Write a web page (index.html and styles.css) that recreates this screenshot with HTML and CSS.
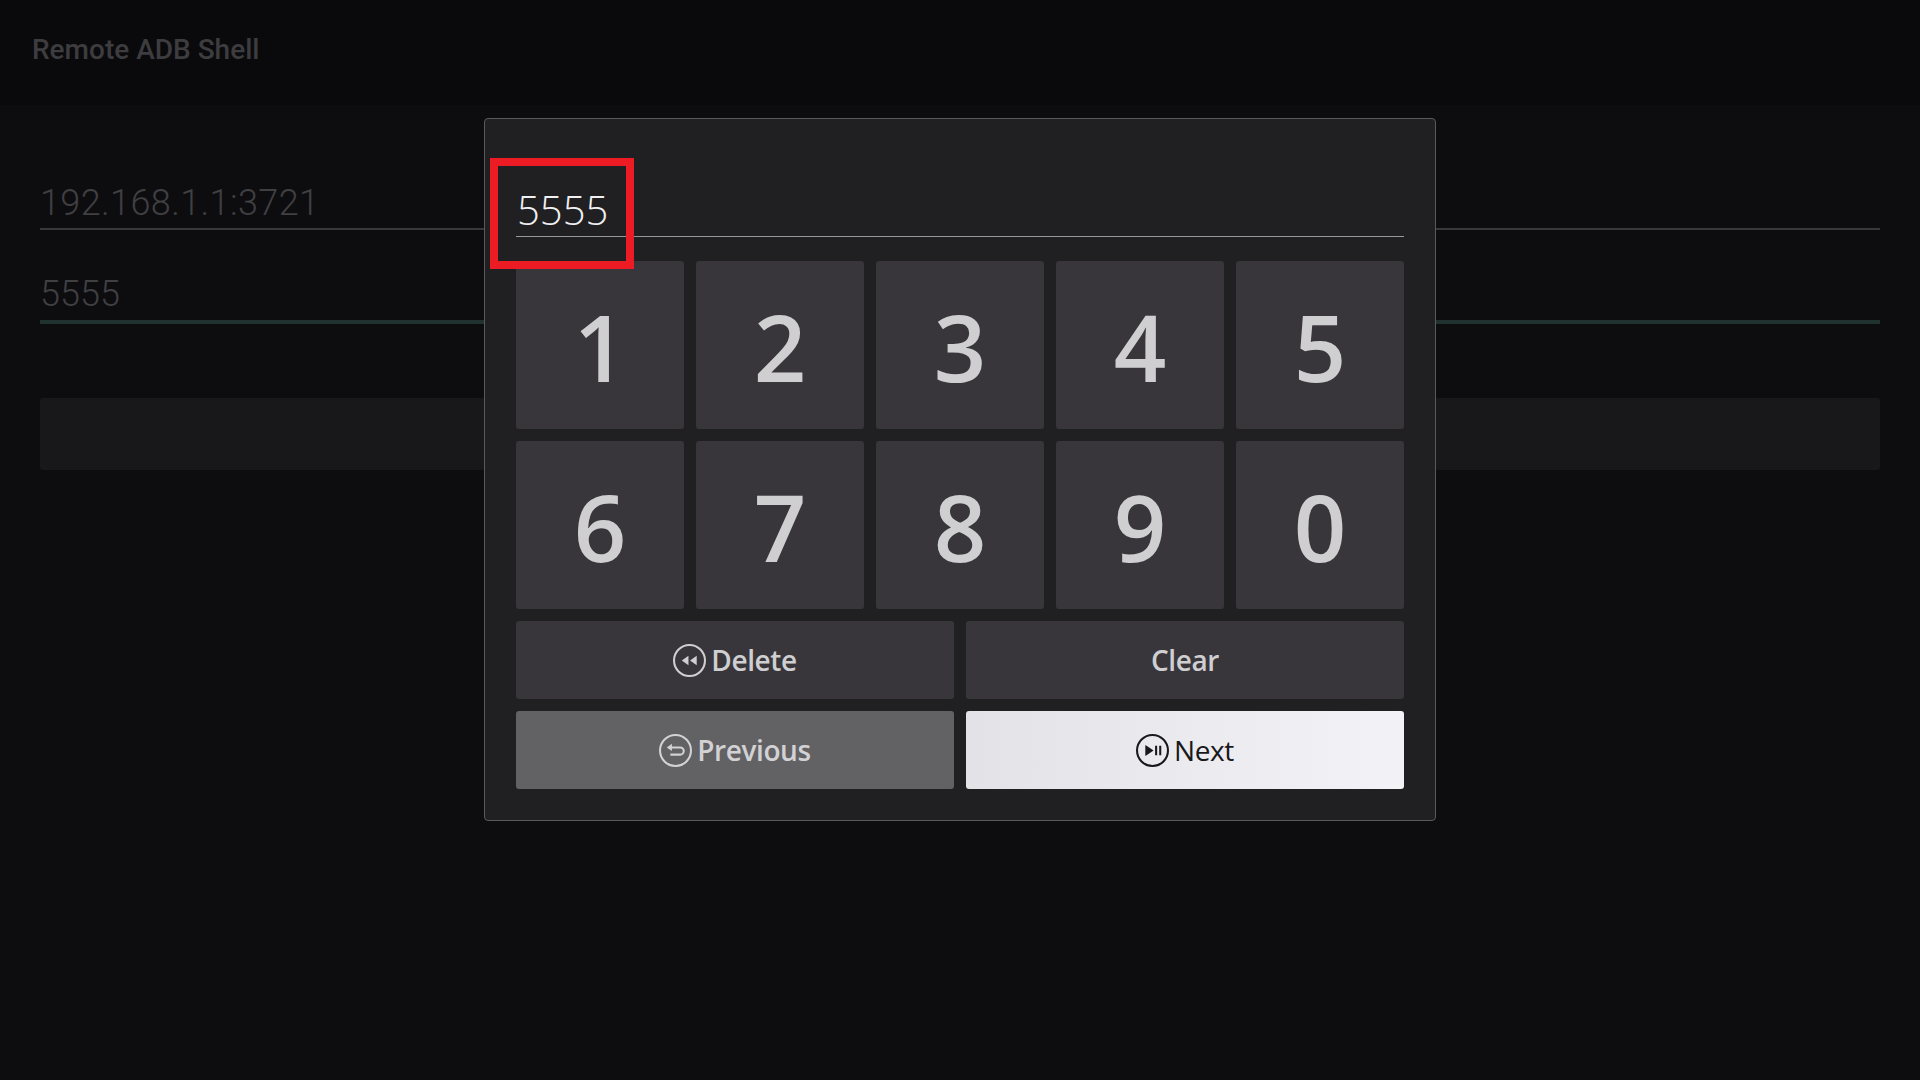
FILE: index.html
```html
<!DOCTYPE html>
<html lang="en">
<head>
    <meta charset="UTF-8">
    <meta name="viewport" content="width=device-width, initial-scale=1.0">
    <title>Remote ADB Shell</title>
    <link rel="stylesheet" href="styles.css">
</head>
<body>
    <!-- App behind the dialog -->
    <header class="app-header">Remote ADB Shell</header>
    <main class="app-form">
        <div class="field field-address">192.168.1.1:3721</div>
        <div class="field field-active">5555</div>
        <div class="connect-button"></div>
    </main>

    <!-- Number pad dialog -->
    <div class="dialog">
        <div class="entry">5555</div>
        <div class="digits">
            <button class="key">1</button>
            <button class="key">2</button>
            <button class="key">3</button>
            <button class="key">4</button>
            <button class="key">5</button>
            <button class="key">6</button>
            <button class="key">7</button>
            <button class="key">8</button>
            <button class="key">9</button>
            <button class="key">0</button>
        </div>
        <div class="actions">
            <button class="action">
                <svg class="icon" viewBox="0 0 32 32">
                    <circle class="ring" cx="16" cy="16" r="15"/>
                    <path class="solid" d="M15 11.500v9L8.500 16zM23 11.500v9L16.500 16z"/>
                </svg>
                Delete
            </button>
            <button class="action">Clear</button>
            <button class="action action-muted">
                <svg class="icon" viewBox="0 0 32 32">
                    <circle class="ring" cx="16" cy="16" r="15"/>
                    <path class="line" d="M10 13h10.500a3.500 3.500 0 0 1 0 7H11"/>
                    <path class="solid" d="M12.500 9.500v7L7.500 13z"/>
                </svg>
                Previous
            </button>
            <button class="action action-focus">
                <svg class="icon" viewBox="0 0 32 32">
                    <circle class="ring" cx="16" cy="16" r="15"/>
                    <path class="solid" d="M9 11h0.500l7.500 5-7.500 5H9z"/>
                    <path class="solid" d="M18.500 11.500h2v9h-2zM22.500 11.500h2v9h-2z"/>
                </svg>
                Next
            </button>
        </div>
    </div>

    <!-- Red callout around the entered value -->
    <div class="callout"></div>
</body>
</html>
```

FILE: styles.css
```css
* {
    margin: 0;
    padding: 0;
    box-sizing: border-box;
}

body {
    position: relative;
    width: 1920px;
    height: 1080px;
    overflow: hidden;
    background: #0d0d10;
    font-family: 'Open Sans', sans-serif;
}

/* Dimmed app */
.app-header {
    height: 105px;
    padding: 33px 0 0 32px;
    background: #0a0a0d;
    font-family: 'Roboto', sans-serif;
    font-size: 28px;
    font-weight: 500;
    line-height: 34px;
    color: #3d3c3f;
}

.app-form {
    padding: 75px 40px 0;
}

.field {
    height: 50px;
    border-bottom: 2px solid #38373a;
    margin-bottom: 40px;
    font-family: 'Roboto', sans-serif;
    font-size: 36px;
    font-weight: 300;
    line-height: 46px;
    color: #403f42;
}

.field-address {
    letter-spacing: 0.4px;
}

.field-active {
    height: 54px;
    border-bottom: 4px solid #20322f;
    margin-bottom: 74px;
    line-height: 48px;
}

.connect-button {
    height: 72px;
    border-radius: 3px;
    background: #18181a;
}

/* Dialog */
.dialog {
    position: absolute;
    left: 484px;
    top: 118px;
    width: 952px;
    height: 703px;
    padding: 66px 31px 0;
    background: #201f22;
    border: 1px solid #5a5a5d;
    border-radius: 4px;
}

.entry {
    height: 52px;
    padding-left: 1px;
    border-bottom: 1px solid #98979a;
    font-size: 40px;
    font-weight: 300;
    line-height: 50px;
    color: #f0f0f2;
}

button {
    display: flex;
    align-items: center;
    justify-content: center;
    border: none;
    border-radius: 3px;
    font-family: 'Open Sans', sans-serif;
    color: #cfced1;
    background: #38363a;
}

.digits {
    display: grid;
    grid-template-columns: repeat(5, 168px);
    grid-auto-rows: 168px;
    gap: 12px;
    margin-top: 24px;
}

.key {
    padding-top: 4px;
    font-size: 92px;
    font-weight: 600;
    line-height: 1;
}

.actions {
    display: grid;
    grid-template-columns: repeat(2, 438px);
    grid-auto-rows: 78px;
    gap: 12px;
    margin-top: 12px;
}

.action {
    gap: 5px;
    font-size: 28px;
    font-weight: 600;
    letter-spacing: -0.4px;
}

.action-muted {
    background: #626164;
    color: #d2d1d4;
}

.action-focus {
    background: linear-gradient(90deg, #e3e2e6, #f3f2f6);
    color: #19181b;
    font-weight: 500;
}

.icon {
    width: 33px;
    height: 33px;
}

.ring {
    fill: none;
    stroke: currentColor;
    stroke-width: 2;
}

.line {
    fill: none;
    stroke: currentColor;
    stroke-width: 2;
}

.solid {
    fill: currentColor;
}

/* Annotation */
.callout {
    position: absolute;
    left: 490px;
    top: 158px;
    width: 144px;
    height: 111px;
    border: 8px solid #ed1c24;
}
```
